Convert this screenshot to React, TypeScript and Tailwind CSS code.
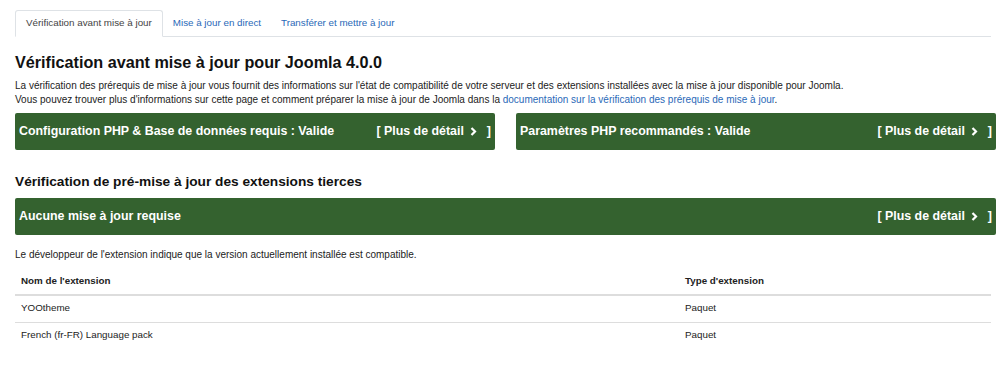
import * as React from 'react';

const green = 'bg-[#34622f]';

function Chevron() {
  return (
    <svg width="7" height="9" viewBox="0 0 7 9" className="inline-block mx-[6px] mb-[1px]">
      <path d="M1.5 1 L5 4.5 L1.5 8" fill="none" stroke="white" strokeWidth="2.2" />
    </svg>
  );
}

function Detail() {
  return (
    <span className="whitespace-nowrap">
      [ Plus de détail
      <Chevron />
      <span className="ml-[4px]">]</span>
    </span>
  );
}

function StatusBox({ label, className = '' }: { label: string; className?: string }) {
  return (
    <div className={`${green} ${className} h-[37px] rounded-[2px] flex items-center justify-between pl-[4px] pr-[4px] text-white text-[12.4px] font-bold`}>
      <span>{label}</span>
      <Detail />
    </div>
  );
}

export default function App() {
  const tabs = ['Vérification avant mise à jour', 'Mise à jour en direct', 'Transférer et mettre à jour'];
  const rows = [
    { name: 'YOOtheme', type: 'Paquet' },
    { name: 'French (fr-FR) Language pack', type: 'Paquet' },
  ];

  return (
    <div className="w-[1000px] h-[368px] bg-white text-[#222] pl-[15px] pr-[4px] pt-[10px]" style={{ fontFamily: '"Liberation Sans", Arial, sans-serif' }}>
      {/* tabs */}
      <div className="flex border-b border-[#dee2e6] mr-[5px] h-[27px]">
        {tabs.map((t, i) => (
          <div
            key={t}
            className={
              i === 0
                ? 'h-[27px] px-[10px] flex items-center text-[9.8px] text-[#444] border border-[#dee2e6] border-b-white rounded-t-[3px] bg-white'
                : 'h-[27px] px-[10px] flex items-center text-[9.8px] text-[#2a69b8]'
            }
          >
            {t}
          </div>
        ))}
      </div>

      <h1 className="mt-[14px] text-[16.2px] font-bold leading-[22px] text-[#111]">
        Vérification avant mise à jour pour Joomla 4.0.0
      </h1>
      <p className="mt-[6px] text-[10px] leading-[14px] text-[#222]">
        La vérification des prérequis de mise à jour vous fournit des informations sur l'état de compatibilité de votre serveur et des extensions installées avec la mise à jour disponible pour Joomla.
        <br />
        Vous pouvez trouver plus d'informations sur cette page et comment préparer la mise à jour de Joomla dans la{' '}
        <span className="text-[#2a69b8]">documentation sur la vérification des prérequis de mise à jour</span>.
      </p>

      <div className="mt-[6px] flex gap-[21px]">
        <StatusBox className="w-[480px]" label="Configuration PHP & Base de données requis : Valide" />
        <StatusBox className="w-[480px]" label="Paramètres PHP recommandés : Valide" />
      </div>

      <h2 className="mt-[24px] text-[13.7px] font-bold leading-[16px] text-[#111]">
        Vérification de pré-mise à jour des extensions tierces
      </h2>
      <StatusBox className="mt-[8px]" label="Aucune mise à jour requise" />

      <p className="mt-[13px] text-[10px] leading-[14px]">
        Le développeur de l'extension indique que la version actuellement installée est compatible.
      </p>

      <table className="mt-[6px] w-[976px] text-[9.8px] border-collapse">
        <thead>
          <tr className="border-b-2 border-[#ddd] h-[27px]">
            <th className="text-left font-bold pl-[6px] w-[670px]">Nom de l'extension</th>
            <th className="text-left font-bold">Type d'extension</th>
          </tr>
        </thead>
        <tbody>
          {rows.map((r, i) => (
            <tr key={r.name} className={`h-[27px] ${i === 0 ? 'border-b border-[#ddd]' : ''}`}>
              <td className="pl-[6px]">{r.name}</td>
              <td>{r.type}</td>
            </tr>
          ))}
        </tbody>
      </table>
    </div>
  );
}
